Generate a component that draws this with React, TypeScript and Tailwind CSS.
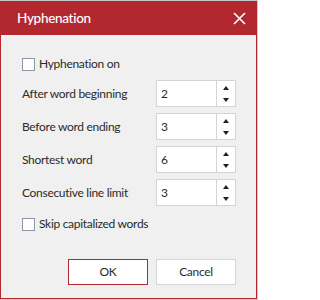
import { useState } from 'react'

const rows = [
  { label: 'After word beginning', value: '2' },
  { label: 'Before word ending', value: '3' },
  { label: 'Shortest word', value: '6' },
  { label: 'Consecutive line limit', value: '3' },
]

function Check({ label }: { label: string }) {
  const [on, setOn] = useState(false)
  return (
    <label className="flex h-[20px] cursor-pointer items-center gap-[4px]">
      <span
        onClick={() => setOn(!on)}
        className="h-[13px] w-[13px] border border-[#8c96a5] bg-white"
      />
      <span>{label}</span>
    </label>
  )
}

function Spinner({ value }: { value: string }) {
  return (
    <div className="flex h-[27px] w-[80px] border border-[#d4d4d4] bg-white">
      <div className="flex flex-1 items-center pl-[4px]">{value}</div>
      <div className="flex w-[19px] flex-col items-center justify-center gap-[8px] border-l border-[#d4d4d4]">
        <svg width="6" height="4" viewBox="0 0 6 4">
          <path d="M3 0L6 4H0Z" fill="#222" />
        </svg>
        <svg width="6" height="4" viewBox="0 0 6 4">
          <path d="M0 0H6L3 4Z" fill="#222" />
        </svg>
      </div>
    </div>
  )
}

export default function App() {
  return (
    <div className="h-[300px] w-[258px] bg-[#c8c8c8] pt-[1px] font-['Lato',sans-serif] text-[12px] tracking-[-0.3px] text-[#2b2b2b]">
      <div className="flex h-[298px] w-[257px] flex-col border border-[#b3282e] bg-[#f0f0f0]">
        {/* Header */}
        <div className="flex h-[33px] items-center justify-between bg-[#b3282e] pl-[16px] pr-[10px] text-white">
          <span className="text-[13.5px] font-medium">Hyphenation</span>
          <svg width="13" height="13" viewBox="0 0 13 13">
            <path d="M1 1L12 12M12 1L1 12" stroke="#fff" strokeWidth="1.6" />
          </svg>
        </div>

        {/* Body */}
        <div className="flex flex-col gap-[6px] pl-[21px] pr-[20px] pt-[19px]">
          <Check label="Hyphenation on" />
          {rows.map((r) => (
            <div key={r.label} className="flex items-center justify-between">
              <span>{r.label}</span>
              <Spinner value={r.value} />
            </div>
          ))}
          <div className="mt-[2px]">
            <Check label="Skip capitalized words" />
          </div>
          <div className="mt-[19px] flex justify-end gap-[8px]">
            <button className="h-[26px] w-[80px] border border-[#b3282e] bg-white">
              OK
            </button>
            <button className="h-[26px] w-[80px] border border-[#d6d6d6] bg-white">
              Cancel
            </button>
          </div>
        </div>
      </div>
    </div>
  )
}
